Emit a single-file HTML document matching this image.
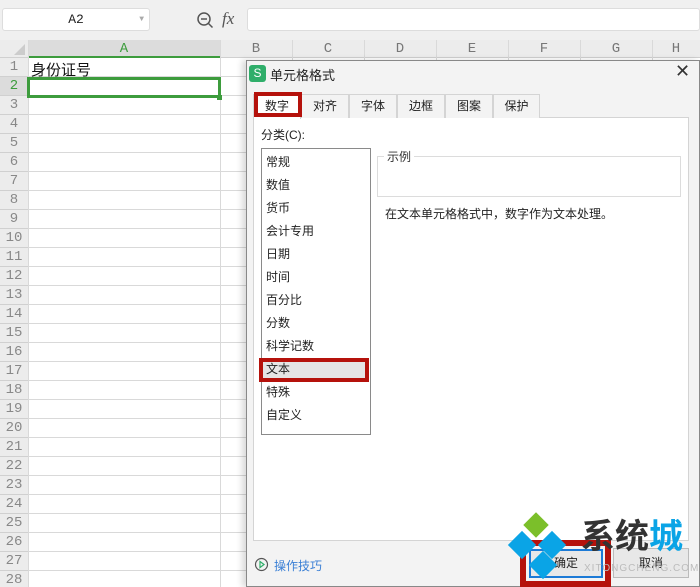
<!DOCTYPE html>
<html><head><meta charset="utf-8"><style>
*{margin:0;padding:0;box-sizing:border-box}
html,body{width:700px;height:587px;overflow:hidden}
body{background:#fff;font-family:"Liberation Sans","Noto Sans CJK SC",sans-serif;font-size:12px;color:#222;position:relative}
.abs{position:absolute}
.rh{position:absolute;left:0;width:28px;height:19px;background:#ececec;border-bottom:1px solid #d0d0d0;color:#888;font-family:"Liberation Mono",monospace;font-size:14px;text-align:center;line-height:19px}
.hl{position:absolute;left:28px;width:672px;height:1px;background:#d9d9d9}
.vl{position:absolute;top:40px;width:1px;height:547px;background:#d9d9d9}
.ch{position:absolute;top:40px;height:18px;color:#777;font-family:"Liberation Mono",monospace;font-size:14px;text-align:center;line-height:18px}
.tab{position:absolute;top:94px;height:24px;border:1px solid #d4d4d4;border-bottom:none;background:#f3f3f3;text-align:center;line-height:23px;font-size:12px}
.li{position:absolute;left:266px;font-size:12px}
</style></head><body>
<div class="abs" style="left:0;top:0;width:700px;height:40px;background:#f0f0f0"></div>
<div class="abs" style="left:2px;top:8px;width:148px;height:23px;background:#fff;border:1px solid #ddd;border-radius:3px;text-align:center;line-height:21px;font-family:'Liberation Mono',monospace;font-size:13px">A2<span style="position:absolute;right:5px;top:0;color:#aaa;font-size:8px">▼</span></div>
<svg class="abs" style="left:196px;top:11px" width="18" height="18"><circle cx="8" cy="8" r="6" fill="none" stroke="#555" stroke-width="1.5"/><path d="M5 8h6M12.5 12.5l4 4" stroke="#555" stroke-width="1.5"/></svg>
<div class="abs" style="left:222px;top:9px;font-family:'Liberation Serif',serif;font-style:italic;font-size:17px;color:#555">fx</div>
<div class="abs" style="left:247px;top:8px;width:453px;height:23px;background:#fff;border:1px solid #ddd;border-radius:3px"></div>
<div class="abs" style="left:0;top:40px;width:700px;height:18px;background:#ececec;border-bottom:1px solid #d0d0d0"></div>
<div class="abs" style="left:28px;top:40px;width:192px;height:18px;background:#dcdcdc;border-bottom:2px solid #3d9c3d"></div>
<div class="ch" style="left:28px;width:192px;color:#3d9c3d">A</div>
<div class="ch" style="left:220px;width:72px">B</div>
<div class="ch" style="left:292px;width:72px">C</div>
<div class="ch" style="left:364px;width:72px">D</div>
<div class="ch" style="left:436px;width:72px">E</div>
<div class="ch" style="left:508px;width:72px">F</div>
<div class="ch" style="left:580px;width:72px">G</div>
<div class="ch" style="left:652px;width:48px">H</div>
<svg class="abs" style="left:14px;top:44px" width="12" height="12"><path d="M0 11L11 0V11Z" fill="#ccc"/></svg>
<div id="rows"></div>
<div class="vl" style="left:28px"></div><div class="vl" style="left:220px"></div><div class="vl" style="left:292px"></div><div class="vl" style="left:364px"></div><div class="vl" style="left:436px"></div><div class="vl" style="left:508px"></div><div class="vl" style="left:580px"></div><div class="vl" style="left:652px"></div>
<script>
var h='';for(var i=1;i<=28;i++){var t=58+(i-1)*19;h+='<div class="rh" style="top:'+t+'px;'+(i==2?'color:#3d9c3d;background:#dcdcdc':'')+'">'+i+'</div><div class="hl" style="top:'+(t+18)+'px"></div>';}
document.getElementById('rows').innerHTML=h;
</script>
<div class="abs" style="left:31px;top:59px;font-size:15px;color:#111">身份证号</div>
<div class="abs" style="left:27px;top:77px;width:194px;height:21px;border:3px solid #3d9c3d"></div>
<div class="abs" style="left:217px;top:95px;width:5px;height:5px;background:#3d9c3d"></div>

<div class="abs" style="left:246px;top:60px;width:454px;height:527px;background:#f3f3f3;border:1px solid #888;box-shadow:-4px 0 6px rgba(0,0,0,.15)"></div>
<div class="abs" style="left:249px;top:65px;width:17px;height:17px;background:#2fae6a;border-radius:3px;color:#fff;font-size:12px;text-align:center;line-height:17px">S</div>
<div class="abs" style="left:270px;top:65px;font-size:13px">单元格格式</div>
<div class="abs" style="left:675px;top:61px;font-size:18px;color:#333">✕</div>
<div class="abs" style="left:253px;top:117px;width:436px;height:424px;background:#fff;border:1px solid #d4d4d4"></div>
<div class="tab" style="left:253px;width:48px;background:#fff;height:25px">数字</div>
<div class="tab" style="left:301px;width:48px">对齐</div>
<div class="tab" style="left:349px;width:48px">字体</div>
<div class="tab" style="left:397px;width:48px">边框</div>
<div class="tab" style="left:445px;width:48px">图案</div>
<div class="tab" style="left:493px;width:47px">保护</div>
<div class="abs" style="left:254px;top:92px;width:48px;height:25px;border:4px solid #b5120c"></div>
<div class="abs" style="left:261px;top:126px">分类(C):</div>
<div class="abs" style="left:261px;top:148px;width:110px;height:287px;border:1px solid #8a8a8a;background:#fff"></div>
<div class="abs" style="left:262px;top:359px;width:104px;height:21px;background:#e5e5e5"></div>
<div class="li" style="top:153px">常规</div><div class="li" style="top:176px">数值</div><div class="li" style="top:199px">货币</div><div class="li" style="top:222px">会计专用</div><div class="li" style="top:245px">日期</div><div class="li" style="top:268px">时间</div><div class="li" style="top:291px">百分比</div><div class="li" style="top:314px">分数</div><div class="li" style="top:337px">科学记数</div><div class="li" style="top:360px">文本</div><div class="li" style="top:383px">特殊</div><div class="li" style="top:406px">自定义</div>
<div class="abs" style="left:259px;top:358px;width:110px;height:24px;border:4px solid #b5120c"></div>
<div class="abs" style="left:377px;top:156px;width:304px;height:41px;border:1px solid #dcdcdc"></div>
<div class="abs" style="left:384px;top:148px;background:#fff;padding:0 3px;color:#333">示例</div>
<div class="abs" style="left:385px;top:205px">在文本单元格格式中，数字作为文本处理。</div>
<svg class="abs" style="left:254px;top:557px" width="15" height="15"><circle cx="7.5" cy="7.5" r="6" fill="none" stroke="#555" stroke-width="1.2"/><path d="M6 4.5L10 7.5L6 10.5Z" fill="none" stroke="#2fae6a" stroke-width="1.2"/></svg>
<div class="abs" style="left:274px;top:557px;color:#3a7fd5;font-size:12px">操作技巧</div>
<div class="abs" style="left:520px;top:540px;width:91px;height:47px;border:6px solid #b5120c"></div>
<div class="abs" style="left:529px;top:549px;width:74px;height:29px;border:2px solid #1c7ad6;background:#e8e8e8;text-align:center;line-height:25px">确定</div>
<div class="abs" style="left:613px;top:548px;width:76px;height:30px;border:1px solid #bbb;background:#e8e8e8;text-align:center;line-height:28px">取消</div>
<div class="abs" style="left:527px;top:516px;width:18px;height:18px;background:#7bbf2a;transform:rotate(45deg)"></div>
<div class="abs" style="left:512px;top:535px;width:20px;height:20px;background:#0aa4e6;transform:rotate(45deg)"></div>
<div class="abs" style="left:542px;top:535px;width:20px;height:20px;background:#0aa4e6;transform:rotate(45deg)"></div>
<div class="abs" style="left:533px;top:555px;width:20px;height:20px;background:#0aa4e6;transform:rotate(45deg)"></div>
<div class="abs" style="left:581px;top:517px;font-size:34px;line-height:40px;color:#333;font-weight:bold">系统<span style="color:#0aa4e6">城</span></div>
<div class="abs" style="left:584px;top:563px;font-size:10px;color:#bbb;letter-spacing:1px">XITONGCHENG.COM</div>
</body></html>
